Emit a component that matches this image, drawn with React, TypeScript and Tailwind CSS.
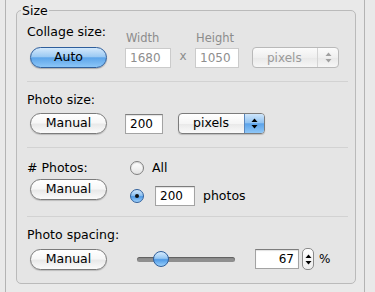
import React from 'react';

const whitePill =
  "rounded-full border border-[#7b7b7b] bg-[linear-gradient(#ffffff_0%,#f7f7f7_45%,#e9e9e9_55%,#fbfbfb_100%)] shadow-[0_1px_1px_rgba(0,0,0,0.18)]";
const bluePill =
  "rounded-full border border-[#2f5f9c] bg-[linear-gradient(#d4e9fc_0%,#9ccaf3_45%,#5da5ea_52%,#8cc6f7_100%)] shadow-[0_1px_1px_rgba(0,0,0,0.25)]";

const Arrows: React.FC<{ color?: string }> = ({ color = '#000' }) => (
  <svg width="7" height="11" viewBox="0 0 7 11">
    <path d="M3.5 0.5 L6.5 4 L0.5 4 Z" fill={color} />
    <path d="M3.5 10.5 L6.5 7 L0.5 7 Z" fill={color} />
  </svg>
);

const Button: React.FC<{ label: string; blue?: boolean }> = ({ label, blue }) => (
  <div
    className={`ml-[3px] flex h-[21px] w-[77px] items-center justify-center text-[12.5px] text-black ${blue ? bluePill : whitePill}`}
  >
    {label}
  </div>
);

const Label: React.FC<{ children: React.ReactNode }> = ({ children }) => (
  <div className="h-[16px] text-[12.5px] leading-[16px] text-black">{children}</div>
);

const Field: React.FC<{ value: string; w: string; disabled?: boolean; right?: boolean }> = ({ value, w, disabled, right }) => (
  <div
    className={`flex h-[20px] items-center bg-white px-[4px] text-[12px] ${w} ${right ? 'justify-end' : ''} ${
      disabled
        ? 'border border-[#cbcbcb] text-[#8e8e8e]'
        : 'border border-[#a3a3a3] border-t-[#7d7d7d] text-black shadow-[inset_0_1px_1px_rgba(0,0,0,0.12)]'
    }`}
  >
    {value}
  </div>
);

const Radio: React.FC<{ on?: boolean }> = ({ on }) =>
  on ? (
    <div className="flex h-[14px] w-[14px] items-center justify-center rounded-full border border-[#30609c] bg-[linear-gradient(#cde5fb_0%,#8fc2f1_45%,#4f9ae6_55%,#9fd0fa_100%)]">
      <div className="h-[4px] w-[4px] rounded-full bg-[#111]" />
    </div>
  ) : (
    <div className="h-[14px] w-[14px] rounded-full border border-[#808080] bg-[linear-gradient(#ffffff_0%,#f3f3f3_50%,#e2e2e2_100%)] shadow-[inset_0_1px_1px_rgba(0,0,0,0.15)]" />
  );

const Separator = () => <div className="mr-[7px] h-px bg-[#d2d2d2]" />;

export default function App() {
  return (
    <div className="h-[292px] w-[375px] overflow-hidden bg-[#e9e9e9] font-['DejaVu_Sans',sans-serif]">
      <div className="ml-[5px] h-full w-[360px] border-x border-[#b3b3b3] pl-[10px] pt-[10px]">
        <div className="relative w-[340px] rounded-[5px] border border-[#bababa] bg-[#e5e5e5] pl-[10px]">
          <div className="absolute left-[4px] top-[-7px] bg-[#e9e9e9] px-[1px] text-[12.5px] leading-[14px] text-black">
            Size
          </div>

          {/* Collage size */}
          <div className="flex items-end pb-[13px] pt-[13px]">
            <div className="w-[98px]">
              <Label>Collage size:</Label>
              <div className="mt-[7px]">
                <Button label="Auto" blue />
              </div>
            </div>
            <div className="flex flex-col">
              <div className="mb-[3px] pl-[1px] text-[11.5px] leading-[14px] text-[#8c8c8c]">Width</div>
              <Field value="1680" w="w-[46px]" disabled />
            </div>
            <div className="w-[24px] pb-[3px] text-center text-[12px] text-[#8c8c8c]">x</div>
            <div className="flex flex-col">
              <div className="mb-[3px] pl-[1px] text-[11.5px] leading-[14px] text-[#8c8c8c]">Height</div>
              <Field value="1050" w="w-[44px]" disabled />
            </div>
            <div className="ml-[13px] flex h-[21px] w-[87px] items-center rounded-[4px] border border-[#b9b9b9] bg-[linear-gradient(#fbfbfb,#efefef_50%,#e8e8e8_51%,#f6f6f6)] text-[12px] text-[#9a9a9a]">
              <div className="flex-1 pl-[14px]">pixels</div>
              <div className="flex h-full w-[21px] items-center justify-center border-l border-[#d4d4d4]">
                <Arrows color="#a0a0a0" />
              </div>
            </div>
          </div>
          <Separator />

          {/* Photo size */}
          <div className="pb-[13px] pt-[10px]">
            <Label>Photo size:</Label>
            <div className="mt-[5px] flex items-center">
              <div className="w-[98px]">
                <Button label="Manual" />
              </div>
              <Field value="200" w="w-[38px]" />
              <div className="ml-[15px] flex h-[21px] w-[87px] items-center overflow-hidden rounded-[4px] border border-[#7b7b7b] bg-[linear-gradient(#ffffff,#f5f5f5_50%,#e8e8e8_51%,#fafafa)] text-[12.5px] text-black shadow-[0_1px_1px_rgba(0,0,0,0.18)]">
                <div className="flex-1 pl-[14px]">pixels</div>
                <div className="flex h-full w-[20px] items-center justify-center border-l border-[#5a87bd] bg-[linear-gradient(#cfe6fb_0%,#93c4f2_45%,#5ca3ea_52%,#8fc7f7_100%)]">
                  <Arrows />
                </div>
              </div>
            </div>
          </div>
          <Separator />

          {/* # Photos */}
          <div className="flex pb-[10px] pt-[12px]">
            <div className="w-[103px]">
              <Label># Photos:</Label>
              <div className="mt-[3px]">
                <Button label="Manual" />
              </div>
            </div>
            <div className="flex flex-col">
              <div className="flex h-[16px] items-center gap-[8px] text-[12.5px]">
                <Radio />
                <span>All</span>
              </div>
              <div className="mt-[10px] flex h-[20px] items-center">
                <Radio on />
                <div className="ml-[11px]">
                  <Field value="200" w="w-[40px]" />
                </div>
                <span className="ml-[8px] text-[12.5px]">photos</span>
              </div>
            </div>
          </div>
          <Separator />

          {/* Photo spacing */}
          <div className="pb-[13px] pt-[10px]">
            <Label>Photo spacing:</Label>
            <div className="mt-[5px] flex items-center">
              <div className="w-[110px]">
                <Button label="Manual" />
              </div>
              <div className="relative h-[5px] w-[98px] rounded-full bg-[#8f8f8f] shadow-[inset_0_1px_1px_rgba(0,0,0,0.35)]">
                <div className="absolute left-[16px] top-[-6px] h-[16px] w-[16px] rounded-full border border-[#2f5f9c] bg-[linear-gradient(#d6ebfd_0%,#96c7f3_45%,#4f9ae6_55%,#9ad0fb_100%)]" />
              </div>
              <div className="ml-[20px]">
                <Field value="67" w="w-[44px]" right />
              </div>
              <div className="ml-[3px] flex h-[22px] w-[12px] flex-col items-center justify-center rounded-[5px] border border-[#8a8a8a] bg-[linear-gradient(#ffffff,#ececec)]">
                <Arrows />
              </div>
              <span className="ml-[5px] text-[12px]">%</span>
            </div>
          </div>
        </div>
      </div>
    </div>
  );
}
